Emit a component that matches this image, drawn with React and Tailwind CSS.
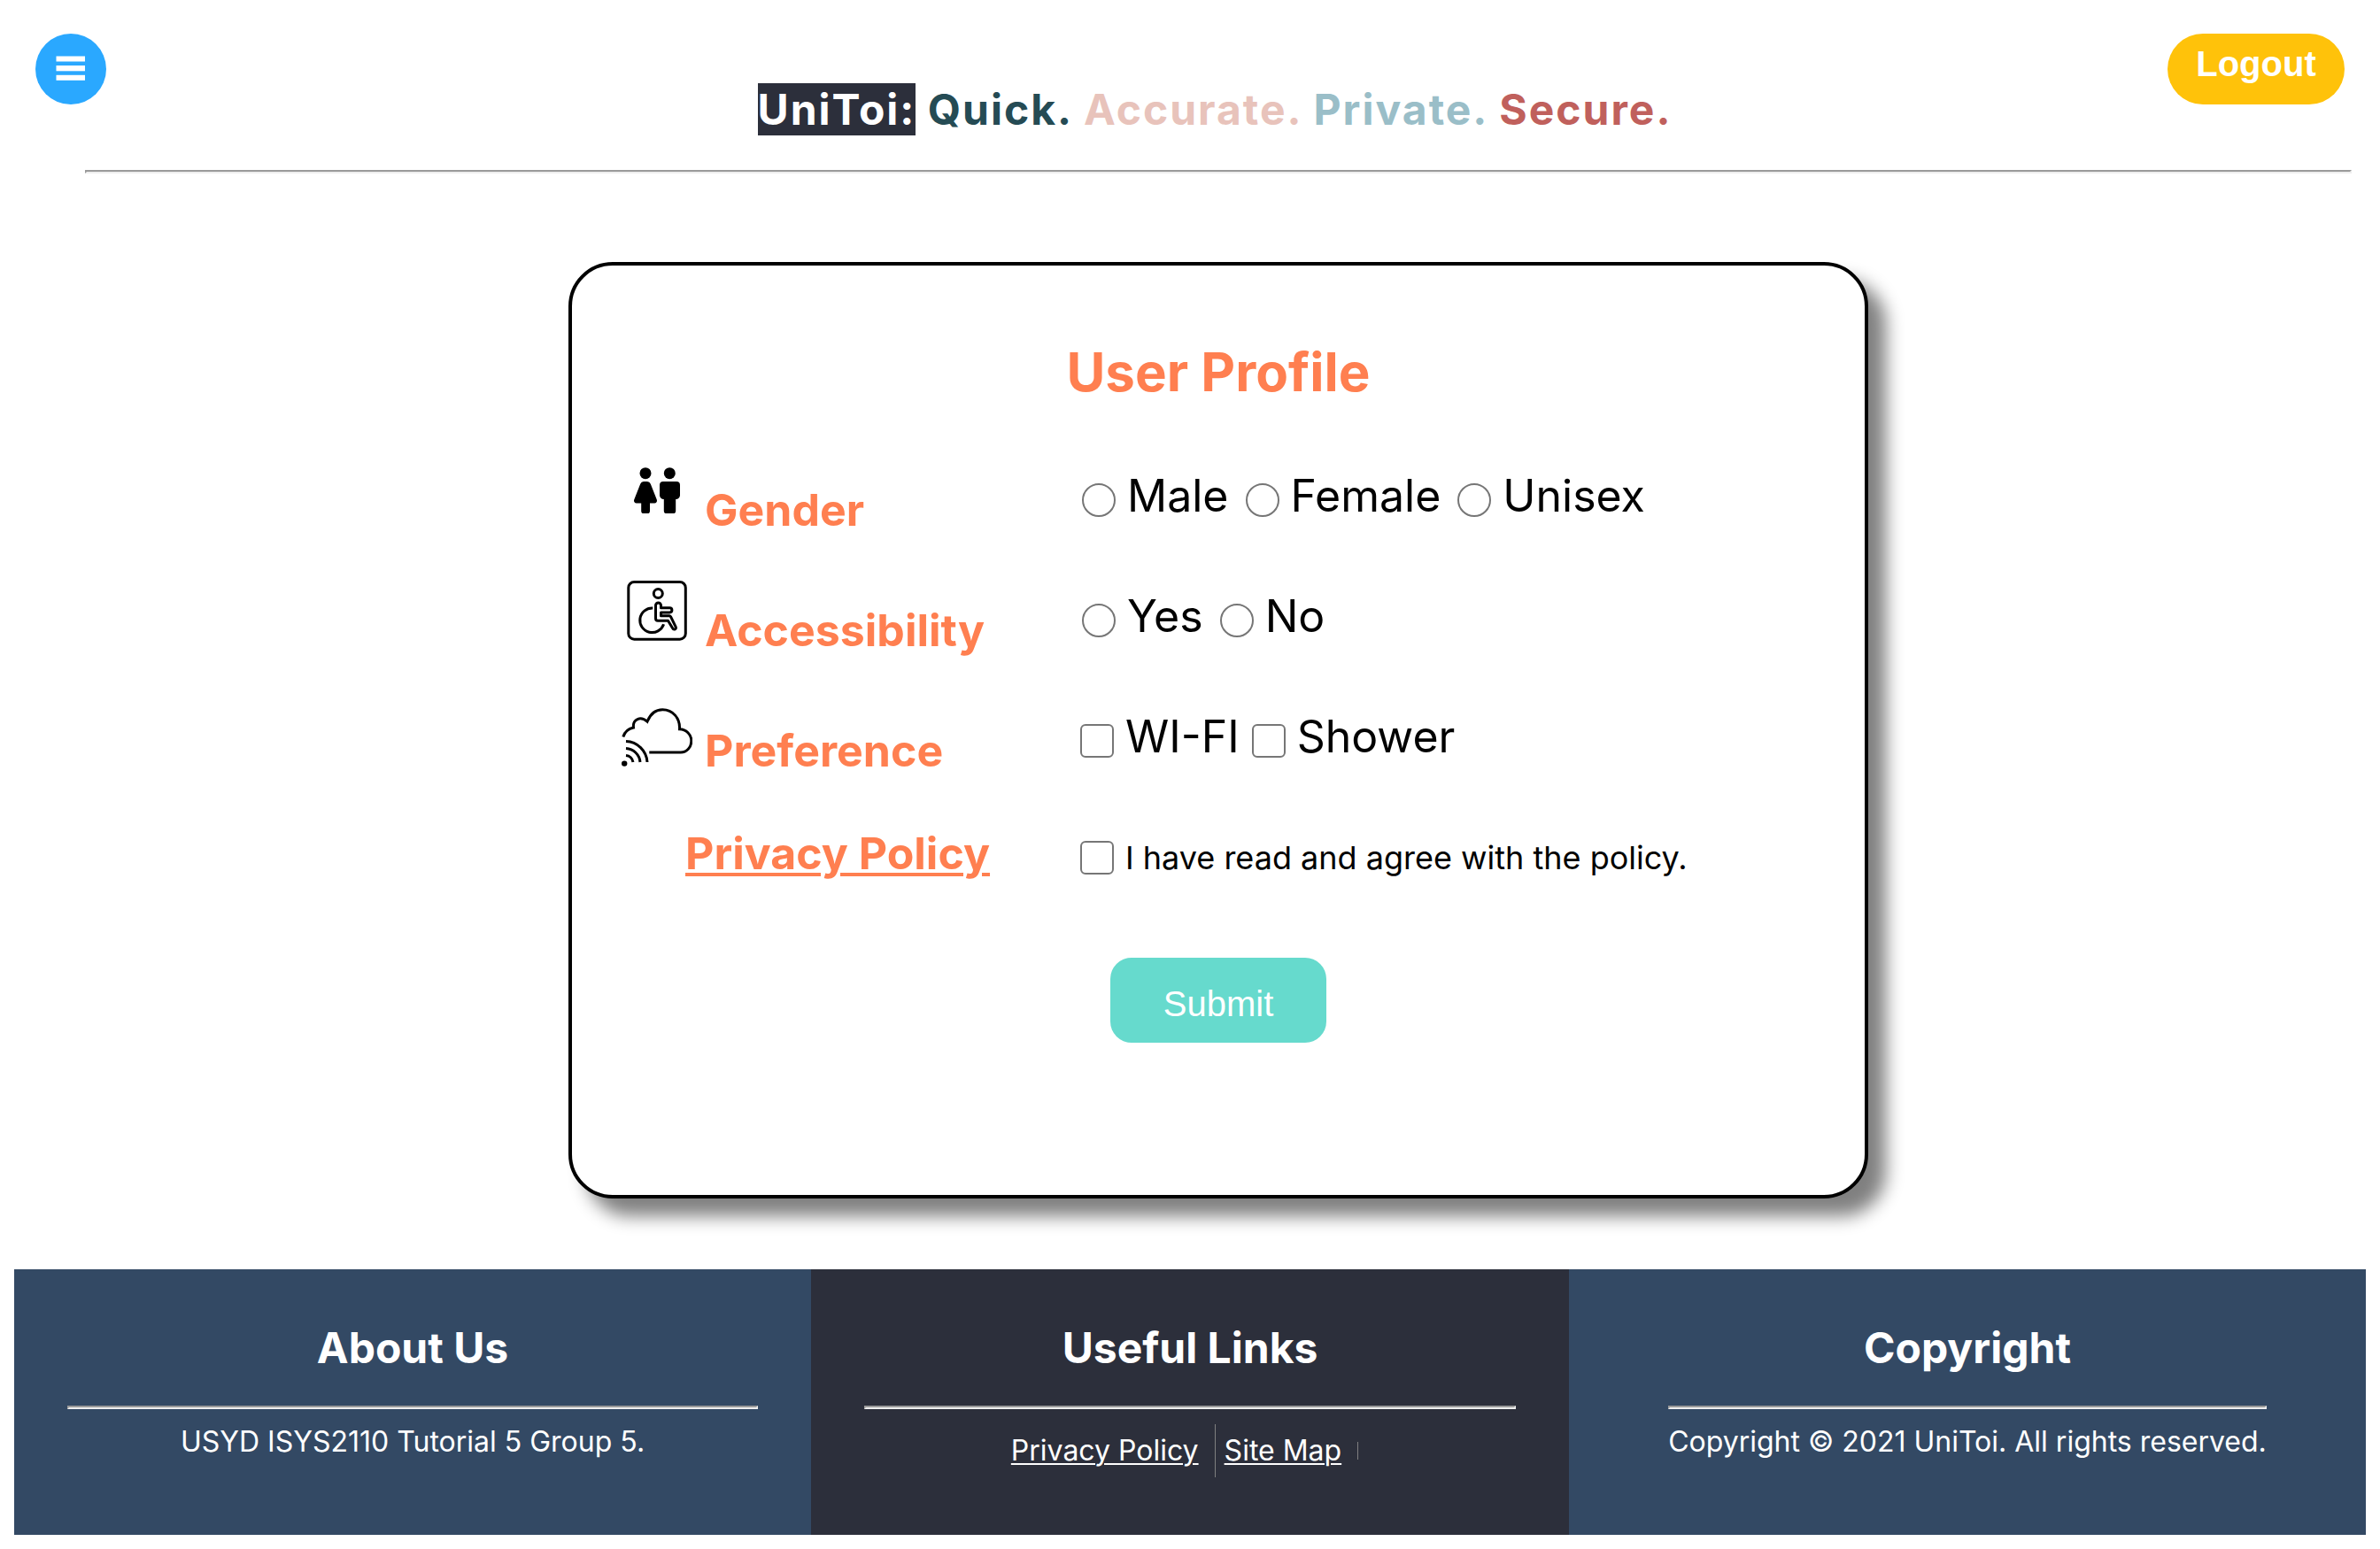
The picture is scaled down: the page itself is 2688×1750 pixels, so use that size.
import React from "react";

const SLOGAN = [
  { text: "Quick.", color: "text-[#254b54]" },
  { text: "Accurate.", color: "text-[#e8c3bb]" },
  { text: "Private.", color: "text-[#9abec8]" },
  { text: "Secure.", color: "text-[#c0605c]" },
];

function RestroomIcon() {
  return (
    <svg viewBox="0 0 80 80" className="size-20 shrink-0" fill="black" aria-hidden="true">
      <circle cx="27" cy="20.7" r="6.5" />
      <path d="M25.5 30h3.4a4.2 4.2 0 0 1 3.9 2.7l7 17.8a2.9 2.9 0 0 1-2.7 4H32v8.7a2.9 2.9 0 0 1-2.9 2.9h-4a2.9 2.9 0 0 1-2.9-2.9v-8.7h-5.3a2.9 2.9 0 0 1-2.7-4l7-17.8a4.2 4.2 0 0 1 4.3-2.7z" />
      <circle cx="54.3" cy="20.7" r="6.5" />
      <path d="M47 30h15a4 4 0 0 1 4 4v11.5a4.5 4.5 0 0 1-4.8 4.5v12.9a3.2 3.2 0 0 1-3.2 3.2h-7a3.2 3.2 0 0 1-3.2-3.2V50A4.5 4.5 0 0 1 43 45.5V34a4 4 0 0 1 4-4z" />
    </svg>
  );
}

function AccessibilityIcon() {
  return (
    <svg
      viewBox="0 0 80 80"
      className="size-20 shrink-0"
      fill="none"
      stroke="black"
      strokeWidth="3"
      strokeLinejoin="round"
      aria-hidden="true"
    >
      <rect x="7.8" y="7.5" width="64.5" height="64.7" rx="6.5" />
      <circle cx="41.3" cy="20.5" r="5" />
      <path d="M35.3 37a13.8 13.8 0 1 0 12.3 18.3" />
      <path d="M38.5 34a3 3 0 0 1 6 0v2.7h9.8a2.6 2.6 0 0 1 0 5.200h-9.800v3.900H54q1 0 1.500.9L61 57.800q1 2.200-.6 3-1.800.8-2.900-1.200L52.500 51.200H41q-2.500 0-2.500-2.500z" />
    </svg>
  );
}

function CloudSignalIcon() {
  return (
    <svg viewBox="0 0 80 80" className="size-20 shrink-0" fill="none" stroke="black" strokeWidth="3" aria-hidden="true">
      <path d="M1.800 46.500C3.300 41.500 7.500 37.300 13.500 36 12.300 26.500 21.500 22.500 29 29.200 32.500 20.500 39 15.700 46.300 15.700c11.500 0 20 9.800 19.200 22 7.500.3 13.300 6 13.300 13.200 0 7.600-5.300 13.100-12 13.100H31.300" />
      <path d="M5 67.500a9 9 0 0 1 8 7.500M5 59.500A17 17 0 0 1 21 75M5 51.500A25 25 0 0 1 29 75" />
      <circle cx="3.200" cy="76.600" r="3.200" fill="black" stroke="none" />
    </svg>
  );
}

function Choice({ type, name, label, small }) {
  return (
    <label className={small ? "flex items-center gap-[13px] text-[36px]" : "flex items-center gap-[13px] text-[50px]"}>
      <input
        type={type}
        name={name}
        className={
          "size-[38px] shrink-0 appearance-none border-2 border-[#767676] bg-white checked:bg-[#0075ff] " +
          (type === "radio" ? "rounded-full " : "rounded-md ") +
          (small ? "" : "mt-2.5")
        }
      />
      <span>{label}</span>
    </label>
  );
}

function ProfileRow({ id, icon, title, radios, children }) {
  return (
    <div
      role={radios ? "radiogroup" : "group"}
      aria-labelledby={id}
      className="grid h-34 grid-cols-[518px_1fr] items-start"
    >
      <div className="flex items-baseline gap-3.5">
        {icon}
        <h3 id={id} className="text-[50px] leading-[50px] font-bold text-[#ff7f50]">
          {title}
        </h3>
      </div>
      <div
        className={radios ? "flex gap-[19px] pt-4 pl-0.5 leading-[60px]" : "flex gap-3.5 pt-4 leading-[60px]"}
      >
        {children}
      </div>
    </div>
  );
}

function Rule() {
  return (
    <hr className="h-0 border-2 border-t-[#9a9a9a] border-r-[#eeeeee] border-b-[#eeeeee] border-l-[#9a9a9a]" />
  );
}

function FooterColumn({ title, dark, fit, children }) {
  return (
    <section
      className={
        "px-15 pt-[59px] pb-[65px] text-center text-[32px] leading-[40px] text-white " +
        (dark ? "bg-[#2c2f3b]" : "bg-[#334964]")
      }
    >
      <div className={fit ? "mx-auto w-fit" : ""}>
        <h2 className="mb-[35px] text-[48px] leading-[60px] font-bold">{title}</h2>
        <Rule />
        <div className="mt-[17px]">{children}</div>
      </div>
    </section>
  );
}

export default function App() {
  return (
    <div className="bg-white pb-4 font-[Inter,sans-serif] text-black">
      <header className="grid grid-cols-[200px_1fr_200px] items-start px-10 pt-[38px]">
        <button
          type="button"
          aria-label="Open menu"
          className="flex size-20 items-center justify-center rounded-full bg-[#2aa8ff] pb-0.5"
        >
          <svg viewBox="0 0 34 28" className="h-7 w-[34px]" fill="white" aria-hidden="true">
            <rect x="0.5" y="0.5" width="32.5" height="6" />
            <rect x="0.5" y="11" width="32.5" height="6.3" />
            <rect x="0.5" y="21.8" width="32.5" height="6" />
          </svg>
        </button>
        <h1 className="pt-[57px] pl-14 text-center text-[48px] leading-[58px] font-bold tracking-[2px]">
          <span className="bg-[#2c2f3b] text-white">UniToi:</span>
          {SLOGAN.map(({ text, color }) => (
            <React.Fragment key={text}>
              {" "}
              <span className={color}>{text}</span>
            </React.Fragment>
          ))}
        </h1>
        <button
          type="button"
          className="h-20 rounded-full bg-[#ffc20a] pt-3.5 pb-[26px] font-['Liberation_Sans',sans-serif] text-[40px] leading-[40px] font-bold text-white"
        >
          Logout
        </button>
      </header>

      <main className="mt-[39px] mr-8 ml-24">
        <Rule />

        <form className="mx-auto mt-25 mb-20 max-w-[1468px] rounded-[50px] border-4 border-black bg-white px-14 pt-21 pb-43 shadow-[20px_20px_20px_#808080]">
          <h2 className="mb-[58px] text-center text-[60px] leading-[72px] font-bold text-[#ff7f50]">User Profile</h2>

          <ProfileRow id="gender" icon={<RestroomIcon />} title="Gender" radios>
            <Choice type="radio" name="gender" label="Male" />
            <Choice type="radio" name="gender" label="Female" />
            <Choice type="radio" name="gender" label="Unisex" />
          </ProfileRow>
          <ProfileRow id="accessibility" icon={<AccessibilityIcon />} title="Accessibility" radios>
            <Choice type="radio" name="accessibility" label="Yes" />
            <Choice type="radio" name="accessibility" label="No" />
          </ProfileRow>
          <ProfileRow id="preference" icon={<CloudSignalIcon />} title="Preference">
            <Choice type="checkbox" name="wifi" label="WI-FI" />
            <Choice type="checkbox" name="shower" label="Shower" />
          </ProfileRow>
          <div className="grid h-34 grid-cols-[518px_1fr] items-start leading-[60px]">
            <div className="pt-3 pl-18">
              <a
                href="#privacy"
                className="text-[50px] font-bold text-[#ff7f50] underline decoration-4 underline-offset-4"
              >
                Privacy Policy
              </a>
            </div>
            <div className="pt-[17px]">
              <Choice type="checkbox" name="policy" small label="I have read and agree with the policy." />
            </div>
          </div>

          <div className="mt-6 flex justify-center">
            <button
              type="submit"
              className="rounded-3xl bg-[#66dacd] px-15 pt-8 pb-6 font-['Liberation_Sans',sans-serif] text-[40px] leading-[40px] text-white"
            >
              Submit
            </button>
          </div>
        </form>
      </main>

      <footer className="mx-4 grid grid-cols-[900fr_856fr_900fr]">
        <FooterColumn title="About Us">
          <p>USYD ISYS2110 Tutorial 5 Group 5.</p>
        </FooterColumn>
        <FooterColumn title="Useful Links" dark>
          <nav className="flex h-15 items-center justify-center pr-3">
            <a href="#privacy" className="underline decoration-2 underline-offset-3">
              Privacy Policy
            </a>
            <span className="mr-2.5 ml-[18px] h-15 w-px bg-[#808080]" />
            <a href="#sitemap" className="underline decoration-2 underline-offset-3">
              Site Map
            </a>
            <span className="ml-[18px] h-5 w-px bg-[#808080]" />
          </nav>
        </FooterColumn>
        <FooterColumn title="Copyright" fit>
          <p>Copyright © 2021 UniToi. All rights reserved.</p>
        </FooterColumn>
      </footer>
    </div>
  );
}
